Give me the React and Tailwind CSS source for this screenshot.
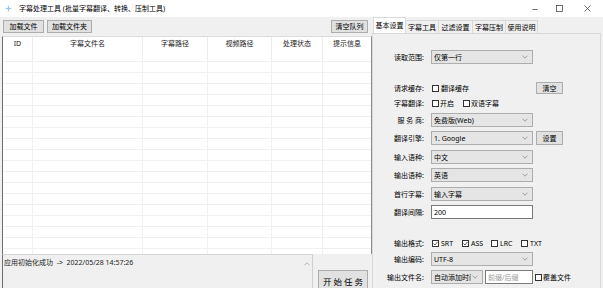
import React from "react"

const cols = [
    ["ID", "w-[30px] border-r"],
    ["字幕文件名", "w-[110px] border-r"],
    ["字幕路径", "w-[65px] border-r"],
    ["视频路径", "w-[64px] border-r"],
    ["处理状态", "w-[51px] border-r"],
    ["提示信息", "flex-1"],
]

function Chevron() {
    return (
        <svg width="6" height="4" viewBox="0 0 6 4">
            <path d="M0.5 0.7 L3 3.2 L5.5 0.7" fill="none" stroke="#8a8a8a" strokeWidth="0.8" />
        </svg>
    )
}

function Combo({ text, w = "w-[102px]" }) {
    return (
        <div className={`${w} h-[14px] bg-[#e5e5e5] border border-[#adadad] flex items-center pl-[2px] pr-[4px]`}>
            <span className="flex-1 min-w-0 whitespace-nowrap overflow-hidden">{text}</span>
            <span className="shrink-0 ml-[1px] flex"><Chevron /></span>
        </div>
    )
}

function Check({ on }) {
    return (
        <span className="w-[7px] h-[7px] border border-[#333] bg-white flex items-center justify-center shrink-0">
            {on && (
                <svg width="5" height="5" viewBox="0 0 5 5">
                    <path d="M0.5 2.5 L2 4 L4.5 0.8" fill="none" stroke="#333" strokeWidth="0.8" />
                </svg>
            )}
        </span>
    )
}

function Btn({ children, className = "" }) {
    return (
        <div className={`bg-[#e1e1e1] border border-[#adadad] flex items-center justify-center whitespace-nowrap ${className}`}>
            {children}
        </div>
    )
}

function Row({ label, children, className = "" }) {
    return (
        <div className={`flex items-center h-[14px] ${className}`}>
            <div className="w-[51px] text-right whitespace-nowrap">{label}</div>
            <div className="ml-[7px] flex items-center">{children}</div>
        </div>
    )
}

export default function App() {
    const rows = Array.from({ length: 18 })

    return (
        <div className="w-[603px] h-[288px] overflow-hidden bg-[#f0f0f0] flex flex-col text-[7px] leading-[9px] text-black font-['Noto_Sans','Noto_Sans_CJK_SC',sans-serif]">
            {/* title bar */}
            <div className="h-[17px] bg-white flex items-center shrink-0">
                <svg className="ml-[5px]" width="7" height="7" viewBox="0 0 7 7">
                    <path d="M3.5 0 L4.2 2.8 L7 3.5 L4.2 4.2 L3.5 7 L2.8 4.2 L0 3.5 L2.8 2.8 Z" fill="#8cc4ee" />
                </svg>
                <span className="ml-[7px] whitespace-nowrap">字幕处理工具 (批量字幕翻译、转换、压制工具)</span>
                <div className="ml-auto flex items-center">
                    <svg width="6" height="6" viewBox="0 0 6 6">
                        <path d="M0.5 3.5 H5.5" stroke="#333" strokeWidth="0.7" />
                    </svg>
                    <svg className="ml-[18px]" width="7" height="7" viewBox="0 0 7 7">
                        <rect x="0.5" y="0.5" width="6" height="6" fill="none" stroke="#333" strokeWidth="0.7" />
                    </svg>
                    <svg className="ml-[21px] mr-[12px]" width="7" height="7" viewBox="0 0 7 7">
                        <path d="M0.5 0.5 L6.5 6.5 M6.5 0.5 L0.5 6.5" stroke="#333" strokeWidth="0.7" />
                    </svg>
                </div>
            </div>

            <div className="flex flex-1 min-h-0">
                {/* left side */}
                <div className="w-[372px] flex flex-col shrink-0">
                    <div className="h-[19px] flex items-start pt-[3px] shrink-0">
                        <Btn className="ml-[3px] w-[41px] h-[13px]">加载文件</Btn>
                        <Btn className="ml-[3px] w-[45px] h-[13px]">加载文件夹</Btn>
                        <Btn className="ml-auto mr-[4px] w-[37px] h-[13px]">清空队列</Btn>
                    </div>

                    <div className="ml-[2px] h-[218px] bg-white border-l border-l-[#6e6e6e] border-t border-t-[#dcdcdc] border-r border-r-[#8c8c8c] overflow-hidden flex flex-col shrink-0">
                        <div className="h-[25px] flex border-b border-[#f0f0f0] shrink-0">
                            {cols.map(([name, cls]) => (
                                <div key={name} className={`${cls} border-[#ececec] text-center pt-[2px] text-[#222]`}>
                                    {name}
                                </div>
                            ))}
                        </div>
                        {rows.map((_, i) => (
                            <div key={i} className="h-[11px] flex border-b border-[#f0f0f0] shrink-0">
                                {cols.map(([name, cls]) => (
                                    <div key={name} className={`${cls} border-[#f0f0f0]`} />
                                ))}
                            </div>
                        ))}
                    </div>

                    <div className="flex flex-1 min-h-0">
                        <div className="ml-[2px] w-[311px] border-l border-l-[#6e6e6e] border-r border-r-[#cfcfcf] border-t border-t-[#d5d5d5] flex">
                            <div className="flex-1 pl-[1px] pt-[3px] whitespace-pre text-[#222]">
                                {"应用初始化成功  ->  2022/05/28 14:57:26"}
                            </div>
                            <div className="w-[11px] flex justify-center pt-[7px]">
                                <svg width="6" height="4" viewBox="0 0 6 4">
                                    <path d="M0.5 3.3 L3 0.8 L5.5 3.3" fill="none" stroke="#a6a6a6" strokeWidth="0.8" />
                                </svg>
                            </div>
                        </div>
                        <Btn className="ml-[5px] mt-[16px] w-[50px] h-[22px] text-[8.5px] tracking-[2px] pl-[2px]">开始任务</Btn>
                    </div>
                </div>

                {/* right side */}
                <div className="flex-1 flex flex-col min-w-0">
                    <div className="h-[16px] flex items-end pl-[1px] shrink-0">
                        <div className="w-[33px] h-[16px] bg-white border border-b-0 border-[#d9d9d9] flex items-center justify-center">基本设置</div>
                        <div className="w-[33px] h-[13px] border-t border-r border-[#d9d9d9] flex items-center justify-center">字幕工具</div>
                        <div className="w-[34px] h-[13px] border-t border-r border-[#d9d9d9] flex items-center justify-center">过滤设置</div>
                        <div className="w-[33px] h-[13px] border-t border-r border-[#d9d9d9] flex items-center justify-center">字幕压制</div>
                        <div className="w-[32px] h-[13px] border-t border-r border-[#d9d9d9] flex items-center justify-center">使用说明</div>
                    </div>

                    <div className="flex-1 mr-[2px] border border-b-0 border-[#d9d9d9] flex flex-col pt-[16px]">
                        <Row label="读取范围:">
                            <Combo text="仅第一行" />
                        </Row>

                        <Row label="请求缓存:" className="mt-[17px]">
                            <div className="w-[102px] flex items-center">
                                <span className="ml-[1px]"><Check /></span>
                                <span className="ml-[2px]">翻译缓存</span>
                            </div>
                            <Btn className="ml-[3px] w-[27px] h-[12px]">清空</Btn>
                        </Row>

                        <Row label="字幕翻译:" className="mt-[1px]">
                            <div className="ml-[1px] w-[31px] flex items-center">
                                <Check />
                                <span className="ml-[1px]">开启</span>
                            </div>
                            <Check />
                            <span className="ml-[1px]">双语字幕</span>
                        </Row>

                        <Row label="服 务 商:" className="mt-[3px]">
                            <Combo text="免费版(Web)" />
                        </Row>

                        <Row label="翻译引擎:" className="mt-[4px]">
                            <Combo text="1. Google" />
                            <Btn className="ml-[3px] w-[27px] h-[14px]">设置</Btn>
                        </Row>

                        <Row label="输入语种:" className="mt-[5px]">
                            <Combo text="中文" />
                        </Row>

                        <Row label="输出语种:" className="mt-[4px]">
                            <Combo text="英语" />
                        </Row>

                        <Row label="首行字幕:" className="mt-[5px]">
                            <Combo text="输入字幕" />
                        </Row>

                        <Row label="翻译间隔:" className="mt-[4px]">
                            <div className="w-[102px] h-[14px] bg-white border border-[#7a7a7a] flex items-center pl-[2px]">200</div>
                        </Row>

                        <Row label="输出格式:" className="mt-[17px]">
                            <div className="ml-[1px] w-[30px] flex items-center">
                                <Check on />
                                <span className="ml-[2px]">SRT</span>
                            </div>
                            <div className="w-[29px] flex items-center">
                                <Check on />
                                <span className="ml-[2px]">ASS</span>
                            </div>
                            <div className="w-[30px] flex items-center">
                                <Check />
                                <span className="ml-[2px]">LRC</span>
                            </div>
                            <div className="flex items-center">
                                <Check />
                                <span className="ml-[2px]">TXT</span>
                            </div>
                        </Row>

                        <Row label="输出编码:" className="mt-[2px]">
                            <Combo text="UTF-8" />
                        </Row>

                        <Row label="输出文件名:" className="mt-[4px]">
                            <Combo text="自动添加时间" w="w-[52px]" />
                            <div className="ml-[2px] w-[48px] h-[14px] bg-white border border-[#7a7a7a] flex items-center pl-[2px] text-[#9a9a9a]">前缀/后缀</div>
                            <span className="ml-[2px]"><Check /></span>
                            <span className="ml-[1px]">覆盖文件</span>
                        </Row>
                    </div>
                </div>
            </div>
        </div>
    )
}
